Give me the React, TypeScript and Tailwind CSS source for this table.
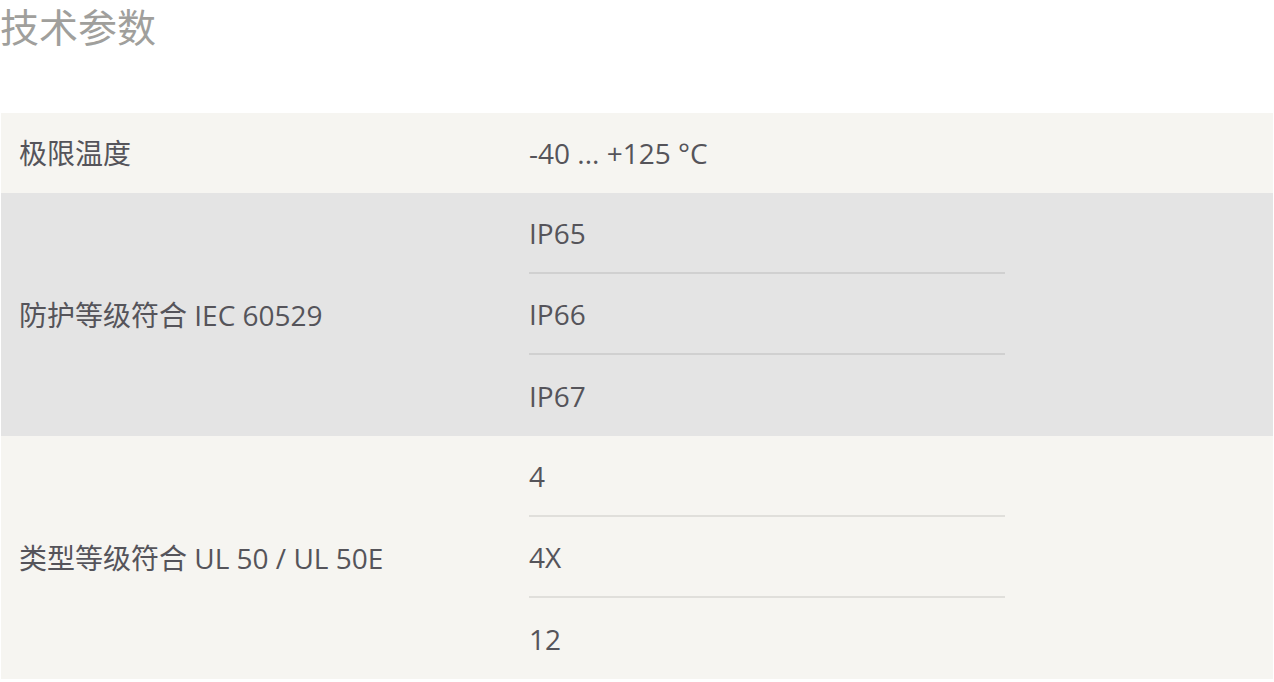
const rows = [
    { label: "极限温度", values: ["-40 ... +125 °C"], bg: "bg-[#f6f5f1]", line: "border-[#e0dfdb]" },
    { label: "防护等级符合 IEC 60529", values: ["IP65", "IP66", "IP67"], bg: "bg-[#e4e4e4]", line: "border-[#d0d0d0]" },
    { label: "类型等级符合 UL 50 / UL 50E", values: ["4", "4X", "12"], bg: "bg-[#f6f5f1]", line: "border-[#e0dfdb]" },
];

const font = { fontFamily: '"Open Sans", "Noto Sans CJK SC", sans-serif' };

const App = () => {
    return (
        <div className="bg-white w-[1274px] h-[682px] overflow-hidden" style={font}>
            {/* Title */}
            <h2 className="text-[39px] leading-[54px] text-[#a09f9c] font-normal h-[113px]">技术参数</h2>

            {/* Spec table */}
            <div className="ml-px w-[1272px]">
                {rows.map((row) => (
                    <div key={row.label} className={`flex ${row.bg}`}>
                        <div className="w-[511px] pl-[18px] flex items-center text-[28px] text-[#55545a]">
                            {row.label}
                        </div>
                        <div className="pl-[17px]">
                            {row.values.map((v, i) => (
                                <div
                                    key={v}
                                    className={`w-[476px] flex items-center text-[28px] text-[#55545a] ${
                                        row.values.length === 1 ? "h-[80px]" : "h-[81px]"
                                    } ${i < row.values.length - 1 ? `border-b-2 ${row.line}` : ""}`}
                                >
                                    {v}
                                </div>
                            ))}
                        </div>
                    </div>
                ))}
            </div>
        </div>
    );
};

export default App;
